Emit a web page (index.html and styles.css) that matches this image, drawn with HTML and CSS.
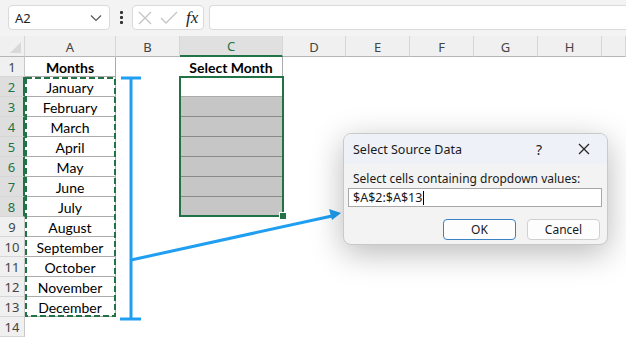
FILE: index.html
```html
<!DOCTYPE html>
<html>
<head>
  <meta charset="UTF-8">
  <title>Select Source Data</title>
  <link rel="stylesheet" href="styles.css">
</head>
<body>
  <div class="toolbar">
    <div class="namebox">
      <span>A2</span>
      <svg class="chev" width="12" height="8" viewBox="0 0 12 8"><path d="M1 1.5 L6 6.5 L11 1.5" fill="none" stroke="#555" stroke-width="1.2"/></svg>
    </div>
    <div class="more"><i></i><i></i><i></i></div>
    <div class="fxbox">
      <svg width="16" height="16" viewBox="0 0 16 16"><path d="M2 2 L14 14 M14 2 L2 14" stroke="#c4c4c4" stroke-width="1.3"/></svg>
      <svg width="18" height="16" viewBox="0 0 18 16"><path d="M1 8 L6 13 L17 2" fill="none" stroke="#c4c4c4" stroke-width="1.3"/></svg>
      <span class="fx">fx</span>
    </div>
    <div class="formula"></div>
  </div>

  <div class="sheet">
    <div class="grid">
      <div class="corner"><span></span></div>
      <div class="colhead">A</div>
      <div class="colhead">B</div>
      <div class="colhead sel">C</div>
      <div class="colhead">D</div>
      <div class="colhead">E</div>
      <div class="colhead">F</div>
      <div class="colhead">G</div>
      <div class="colhead">H</div>
      <div class="colhead"></div>
    </div>
    <div id="rows"></div>

    <svg class="overlay" width="626" height="337" viewBox="0 0 626 337">
      <rect x="26" y="78" width="89" height="238" fill="none" stroke="#217346" stroke-width="2" stroke-dasharray="6 3"/>
      <g stroke="#1f9ef2" stroke-width="3" fill="none">
        <path d="M121 78 H141"/>
        <path d="M131 78 V319"/>
        <path d="M120 319 H141"/>
        <path d="M131 260 L332 216"/>
      </g>
      <path d="M341 213 L329 209 L332 220 Z" fill="#1f9ef2"/>
    </svg>

    <div class="selbox"><span class="handle"></span></div>

    <div class="dialog">
      <div class="dlg-title">
        <span>Select Source Data</span>
        <span class="help">?</span>
        <svg class="close" width="12" height="12" viewBox="0 0 12 12"><path d="M1 1 L11 11 M11 1 L1 11" stroke="#222" stroke-width="1.2"/></svg>
      </div>
      <div class="dlg-body">
        <div class="dlg-label">Select cells containing dropdown values:</div>
        <div class="dlg-input">$A$2:$A$13<span class="caret"></span></div>
        <div class="dlg-buttons">
          <button class="btn primary">OK</button>
          <button class="btn">Cancel</button>
        </div>
      </div>
    </div>
  </div>

  <script>
    // build the rows of the sheet
    const months = ['January', 'February', 'March', 'April', 'May', 'June', 'July',
      'August', 'September', 'October', 'November', 'December'];
    const rows = document.getElementById('rows');
    for (let r = 1; r <= 14; r++) {
      const row = document.createElement('div');
      row.className = 'grid';
      let a = '', aCls = 'cell';
      let c = '', cCls = 'cell';
      if (r === 1) { a = 'Months'; aCls += ' bordered bold'; c = 'Select Month'; cCls += ' bordered bold'; }
      else if (r <= 13) { a = months[r - 2]; aCls += ' bordered'; }
      if (r === 2) cCls += ' bordered';
      if (r > 2 && r <= 8) cCls += ' bordered grey';
      const sel = (r >= 2 && r <= 8) ? ' sel' : '';
      row.innerHTML = `
        <div class="rowhead${sel}">${r}</div>
        <div class="${aCls}">${a}</div>
        <div class="cell"></div>
        <div class="${cCls}">${c}</div>
        <div class="cell"></div><div class="cell"></div><div class="cell"></div>
        <div class="cell"></div><div class="cell"></div><div class="cell"></div>
      `;
      rows.appendChild(row);
    }
  </script>
</body>
</html>
```

FILE: styles.css
```css
body {
  margin: 0;
  width: 626px;
  height: 337px;
  overflow: hidden;
  background-color: #fff;
  font-family: Lato, "Liberation Sans", sans-serif;
  color: #000;
}

/* formula bar */

.toolbar {
  height: 36px;
  background-color: #f3f3f3;
  display: flex;
  align-items: flex-start;
  padding-top: 5px;
  box-sizing: border-box;
}

.namebox {
  margin-left: 8px;
  width: 102px;
  height: 25px;
  box-sizing: border-box;
  border: 1px solid #dadada;
  border-radius: 4px;
  background-color: #fff;
  display: flex;
  align-items: center;
  justify-content: space-between;
  padding: 0 7px 0 6px;
  font-family: "Noto Sans", sans-serif;
  font-size: 13px;
  color: #222;
}

.more {
  width: 22px;
  height: 25px;
  display: flex;
  flex-direction: column;
  align-items: center;
  justify-content: center;
  gap: 2px;
}

.more i {
  width: 3px;
  height: 3px;
  background-color: #333;
  border-radius: 1px;
}

.fxbox {
  width: 72px;
  height: 25px;
  box-sizing: border-box;
  border: 1px solid #dadada;
  border-radius: 4px;
  background-color: #fff;
  display: flex;
  align-items: center;
  gap: 7px;
  padding-left: 4px;
}

.fx {
  font-family: "Liberation Serif", serif;
  font-style: italic;
  font-size: 17px;
  color: #222;
  margin-left: 1px;
}

.formula {
  flex: 1;
  margin-left: 5px;
  height: 25px;
  box-sizing: border-box;
  border: 1px solid #dadada;
  border-right: none;
  border-radius: 4px 0 0 4px;
  background-color: #fff;
}

/* sheet */

.sheet {
  position: relative;
}

.grid {
  display: grid;
  grid-template-columns: 25px 91px 64px 103px 63px 64px 64px 64px 64px 24px;
}

.corner {
  height: 21px;
  box-sizing: border-box;
  background-color: #f0f0f0;
  border-right: 1px solid #d6d6d6;
  border-bottom: 1px solid #b5b5b5;
  position: relative;
}

.corner span {
  position: absolute;
  right: 3px;
  bottom: 3px;
  width: 0;
  height: 0;
  border-left: 11px solid transparent;
  border-bottom: 11px solid #d9d9d9;
}

.colhead {
  height: 21px;
  box-sizing: border-box;
  background-color: #f0f0f0;
  border-right: 1px solid #d6d6d6;
  border-bottom: 1px solid #b5b5b5;
  font-family: "Noto Sans", sans-serif;
  font-size: 13px;
  color: #444;
  text-align: center;
  line-height: 22px;
}

.colhead.sel {
  background-color: #e0e0e0;
  color: #217346;
  border-bottom: 2px solid #217346;
  line-height: 21px;
}

.rowhead {
  height: 20px;
  box-sizing: border-box;
  background-color: #f0f0f0;
  border-right: 1px solid #c9c9c9;
  border-bottom: 1px solid #d6d6d6;
  font-family: "Noto Sans", sans-serif;
  font-size: 13px;
  color: #444;
  text-align: center;
  line-height: 21px;
}

.rowhead.sel {
  background-color: #dedede;
  color: #217346;
  border-right: 2px solid #217346;
}

.cell {
  height: 20px;
  box-sizing: border-box;
  font-size: 14px;
  text-align: center;
  line-height: 21px;
  white-space: nowrap;
}

.cell.bordered {
  border-right: 1px solid #ababab;
  border-bottom: 1px solid #ababab;
}

.cell.bold {
  font-weight: bold;
}

.cell.grey {
  background-color: #c6c6c6;
  border-bottom-color: #8a8a8a;
}

/* overlays */

.overlay {
  position: absolute;
  left: 0;
  top: -36px;
}

.selbox {
  position: absolute;
  left: 179px;
  top: 40px;
  width: 105px;
  height: 141px;
  box-sizing: border-box;
  border: 2px solid #217346;
}

.handle {
  position: absolute;
  right: -5px;
  bottom: -5px;
  width: 6px;
  height: 6px;
  background-color: #217346;
  border: 1px solid #fff;
}

.dialog {
  position: absolute;
  left: 343px;
  top: 97px;
  width: 265px;
  height: 112px;
  box-sizing: border-box;
  border: 1px solid #c9c9c9;
  border-radius: 8px;
  background-color: #f3f3f3;
  box-shadow: 0 8px 32px rgba(0, 0, 0, 0.28);
  overflow: hidden;
  font-family: "Noto Sans", sans-serif;
  font-size: 12px;
  color: #1a1a1a;
}

.dlg-title {
  height: 30px;
  background-color: #eef1f7;
  display: flex;
  align-items: center;
  padding-left: 9px;
  font-size: 12.5px;
}

.dlg-title span:first-child {
  flex: 1;
}

.help {
  margin-right: 36px;
  font-size: 14px;
}

.close {
  margin-right: 17px;
}

.dlg-body {
  padding: 6px 5px 0 4px;
}

.dlg-label {
  padding-left: 5px;
  height: 18px;
  line-height: 18px;
}

.dlg-input {
  height: 19px;
  box-sizing: border-box;
  background-color: #fff;
  border: 1px solid #a8a8a8;
  padding-left: 4px;
  line-height: 17px;
  font-size: 12.5px;
  display: flex;
  align-items: center;
}

.caret {
  width: 1px;
  height: 14px;
  background-color: #000;
  margin-left: 1px;
}

.dlg-buttons {
  display: flex;
  justify-content: flex-end;
  gap: 11px;
  margin-top: 12px;
  padding-right: 2px;
}

.btn {
  width: 73px;
  height: 21px;
  box-sizing: border-box;
  background-color: #fdfdfd;
  border: 1px solid #d0d0d0;
  border-radius: 4px;
  font-family: "Noto Sans", sans-serif;
  font-size: 12px;
  color: #1a1a1a;
  padding: 0;
}

.btn.primary {
  border: 1px solid #3b82c4;
}
```
